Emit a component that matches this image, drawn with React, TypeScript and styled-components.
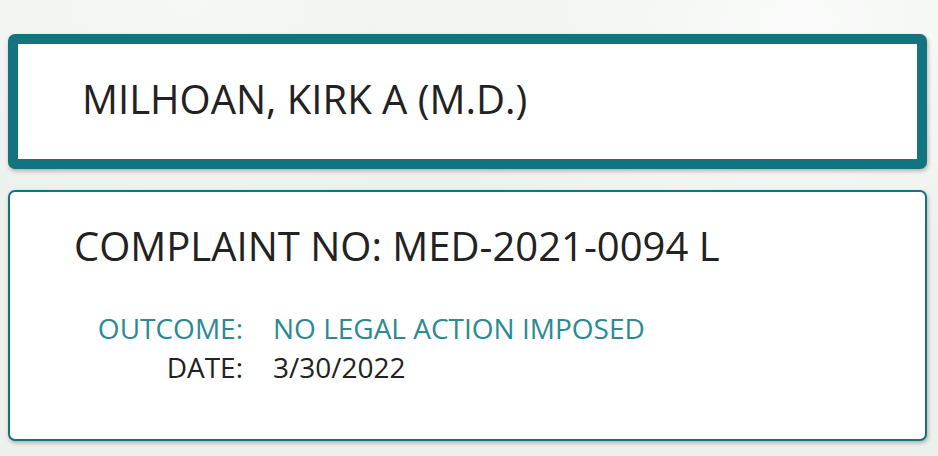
import React from "react";
import styled, { createGlobalStyle } from "styled-components";

const Global = createGlobalStyle`
  html, body { margin: 0; padding: 0; }
  body {
    background: #eef2ee;
    font-family: "Open Sans", "Noto Sans", sans-serif;
    color: #1f1f1f;
  }
`;

const Page = styled.div`
  min-height: 456px;
  box-sizing: border-box;
  padding: 34px 11px 0 8px;
  display: flex;
  flex-direction: column;
  gap: 21px;
  background:
    radial-gradient(ellipse at 85% 5%, rgba(255,255,255,0.7), transparent 40%),
    radial-gradient(ellipse at 20% 0%, rgba(255,255,255,0.5), transparent 35%),
    #edf1ed;
`;

const Card = styled.section<{ $thick?: boolean }>`
  background: #fff;
  border: ${(p) => (p.$thick ? "10px" : "2px")} solid #13737e;
  border-radius: 7px;
  box-shadow: 1px 2px 4px rgba(0, 0, 0, 0.28);
  box-sizing: border-box;
`;

const NameCard = styled(Card)`
  height: 135px;
  display: flex;
  align-items: center;
  padding: 0 0 6px 64px;
`;

const Name = styled.h1`
  margin: 0;
  font-weight: 400;
  font-size: 40px;
  line-height: 1;
  color: #222;
`;

const ComplaintCard = styled(Card)`
  height: 251px;
  padding: 30px 0 0 64px;
`;

const ComplaintTitle = styled.h2`
  margin: 0;
  font-weight: 400;
  font-size: 40px;
  line-height: 48px;
  color: #222;
`;

const Rows = styled.dl`
  margin: 39px 0 0 0;
  display: grid;
  grid-template-columns: 169px auto;
  column-gap: 30px;
  row-gap: 0;
  font-size: 28px;
  line-height: 39px;
`;

const Label = styled.dt<{ $accent?: boolean }>`
  margin: 0;
  text-align: right;
  color: ${(p) => (p.$accent ? "#2b8a94" : "#222")};
`;

const Value = styled.dd<{ $accent?: boolean }>`
  margin: 0;
  color: ${(p) => (p.$accent ? "#2b8a94" : "#222")};
`;

export default function App() {
  return (
    <>
      <Global />
      <Page>
        <NameCard $thick>
          <Name>MILHOAN, KIRK A (M.D.)</Name>
        </NameCard>
        <ComplaintCard>
          <ComplaintTitle>COMPLAINT NO: MED-2021-0094 L</ComplaintTitle>
          <Rows>
            <Label $accent>OUTCOME:</Label>
            <Value $accent>NO LEGAL ACTION IMPOSED</Value>
            <Label>DATE:</Label>
            <Value>3/30/2022</Value>
          </Rows>
        </ComplaintCard>
      </Page>
    </>
  );
}
